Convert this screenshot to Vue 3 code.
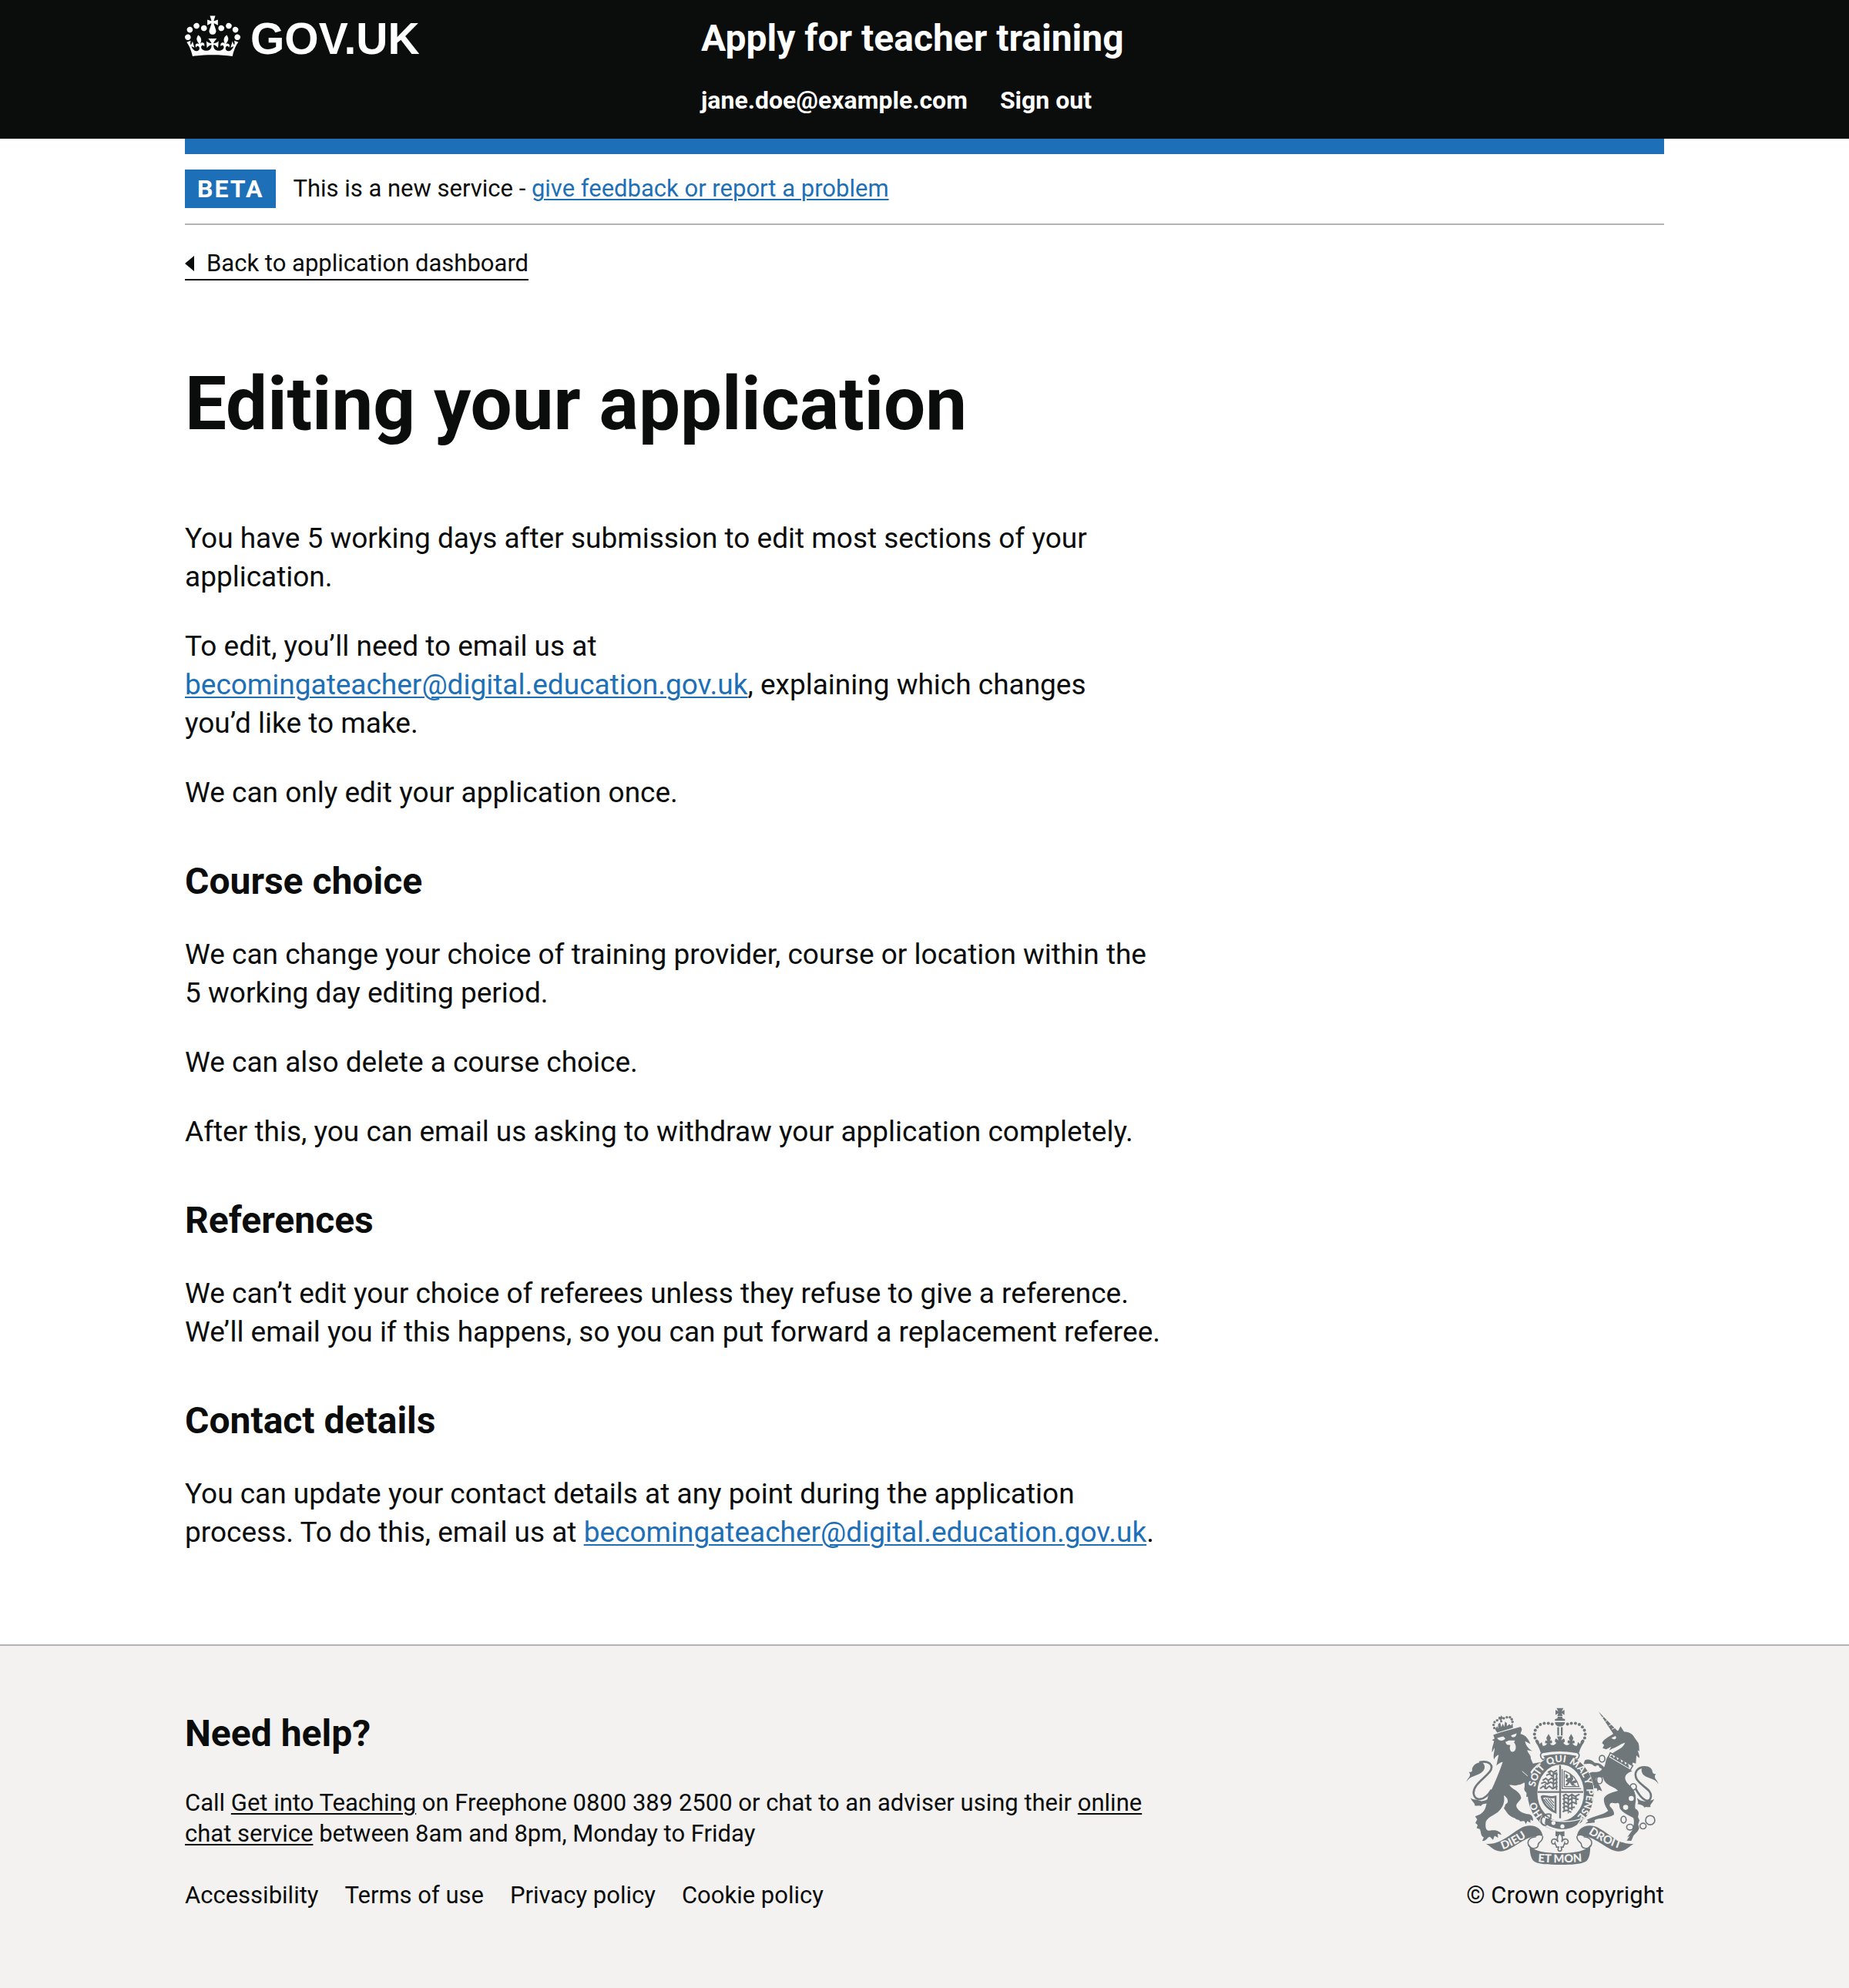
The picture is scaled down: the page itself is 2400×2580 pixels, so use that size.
<script setup>
const supportEmail = 'becomingateacher@digital.education.gov.uk'
const footerLinks = ['Accessibility', 'Terms of use', 'Privacy policy', 'Cookie policy']

// Pearls on the left arch of the crest's crown; the right arch mirrors them.
const crownPearls = [[407, 142], [392, 139], [376, 139], [361, 143], [349, 153], [341, 166], [338, 181], [340, 196], [347, 208]]
const lionPearls = [[192, 127], [182, 134], [178, 145], [181, 157], [218, 119], [230, 115], [242, 115], [249, 123], [252, 133]]
const chainRings = [[602, 277, 11, 13], [592, 360, 11, 15], [724, 387, 12, 12], [686, 515, 10, 13], [711, 544, 13, 11], [762, 540, 12, 11], [790, 517, 18, 18]]
</script>

<template>
  <div class="page">
    <header class="header">
      <div class="container header-grid">
        <a class="logo" href="#" aria-label="GOV.UK">
          <svg class="crown" viewBox="0 0 132 97" aria-hidden="true">
            <path fill="currentColor" fill-rule="evenodd" d="M25 30.2c3.5 1.5 7.7-.2 9.1-3.7 1.5-3.6-.2-7.8-3.9-9.2-3.6-1.4-7.6.3-9.1 3.9-1.4 3.5.3 7.5 3.9 9zM9 39.5c3.6 1.5 7.8-.2 9.2-3.7 1.5-3.6-.2-7.8-3.9-9.1-3.6-1.5-7.6.2-9.1 3.8-1.4 3.5.3 7.5 3.8 9zM4.4 57.2c3.5 1.5 7.7-.2 9.1-3.8 1.5-3.6-.2-7.7-3.9-9.1-3.5-1.5-7.6.3-9.1 3.8-1.4 3.5.3 7.6 3.9 9.1zm38.3-21.4c3.5 1.5 7.7-.2 9.1-3.8 1.5-3.6-.2-7.7-3.9-9.1-3.6-1.5-7.6.3-9.1 3.8-1.3 3.6.4 7.7 3.9 9.1zm64.4-5.6c-3.6 1.5-7.8-.2-9.1-3.7-1.5-3.6.2-7.8 3.8-9.2 3.6-1.4 7.7.3 9.2 3.9 1.3 3.5-.4 7.5-3.9 9zm15.9 9.3c-3.6 1.5-7.7-.2-9.1-3.7-1.5-3.6.2-7.8 3.7-9.1 3.6-1.5 7.7.2 9.2 3.8 1.5 3.5-.3 7.5-3.8 9zm4.7 17.7c-3.6 1.5-7.8-.2-9.2-3.8-1.5-3.6.2-7.7 3.9-9.1 3.6-1.5 7.7.3 9.2 3.8 1.3 3.5-.4 7.6-3.9 9.1zM89.3 35.8c-3.6 1.5-7.8-.2-9.2-3.8-1.4-3.6.2-7.7 3.9-9.1 3.6-1.5 7.7.3 9.2 3.8 1.4 3.6-.3 7.7-3.9 9.1zM69.7 17.7l8.9 4.7V9.3l-8.9 2.8c-.2-.3-.5-.6-.9-.9L72.4 0H59.6l3.5 11.2c-.3.3-.6.5-.9.9l-8.8-2.8v13.1l8.8-4.7c.3.3.6.7.9.9l-5 15.4v.1c-.2.8-.4 1.6-.4 2.4 0 4.1 3.1 7.5 7 8.1h.2c.3 0 .7.1 1 .1.4 0 .7 0 1-.1h.2c4-.6 7.1-4.1 7.1-8.1 0-.8-.1-1.7-.4-2.4V34l-5.1-15.4c.4-.2.7-.6 1-.9zM66 92.8c16.9 0 32.8 1.1 47.1 3.2 4-16.9 8.9-26.7 14-33.5l-9.6-3.4c1 4.9 1.1 7.2 0 10.2-1.5-1.4-3-4.3-4.2-8.7L108.6 76c2.8-2 5-3.2 7.5-3.3-4.4 9.4-10 11.9-13.6 11.2-4.3-.8-6.3-4.6-5.6-7.9 1-4.7 5.7-5.9 8-.5 4.3-8.7-3-11.4-7.6-8.8 7.1-7.2 7.9-13.5 2.1-21.1-8 6.1-8.1 12.3-4.5 20.8-4.7-5.4-12.1-2.5-9.5 6.2 3.4-5.2 7.9-2 7.2 3.1-.6 4.3-6.4 7.8-13.5 7.2-10.3-.9-10.9-8-11.2-13.8 2.5-.5 7.1 1.8 11 7.3L80.2 60c-4.1 4.4-8 5.3-12.3 5.4 1.4-4.4 8-11.6 8-11.6H55.5s6.4 7.2 7.9 11.6c-4.2-.1-8-1-12.3-5.4l1.4 16.4c3.9-5.5 8.5-7.7 10.9-7.3-.3 5.8-.9 12.8-11.1 13.8-7.2.6-12.9-2.9-13.5-7.2-.7-5 3.8-8.3 7.1-3.1 2.7-8.7-4.6-11.6-9.4-6.2 3.7-8.5 3.6-14.7-4.6-20.8-5.8 7.6-5 13.9 2.2 21.1-4.7-2.6-11.9.1-7.7 8.8 2.3-5.5 7.1-4.2 8.1.5.7 3.3-1.3 7.1-5.7 7.9-3.5.7-9-1.8-13.5-11.2 2.5.1 4.7 1.3 7.5 3.3l-4.7-15.4c-1.2 4.4-2.7 7.2-4.3 8.7-1.1-3-.9-5.3 0-10.2l-9.5 3.4c5 6.9 9.9 16.7 14 33.5 14.8-2.1 30.8-3.2 47.7-3.2z" />
          </svg>
          <span>GOV.UK</span>
        </a>
        <div>
          <a class="service-name" href="#">Apply for teacher training</a>
          <nav class="account-nav" aria-label="Account">
            <a href="#">jane.doe@example.com</a>
            <a href="#">Sign out</a>
          </nav>
        </div>
      </div>
    </header>

    <div class="container">
      <div class="phase-banner">
        <strong class="tag">BETA</strong>
        <span>This is a new service - <a class="link" href="#">give feedback or report a problem</a></span>
      </div>
      <a class="back-link" href="#">Back to application dashboard</a>

      <main class="main">
        <h1>Editing your application</h1>
        <p>You have 5 working days after submission to edit most sections of your application.</p>
        <p>To edit, you’ll need to email us at <a class="link" :href="`mailto:${supportEmail}`">{{ supportEmail }}</a>, explaining which changes you’d&nbsp;like to make.</p>
        <p>We can only edit your application once.</p>

        <h2>Course choice</h2>
        <p>We can change your choice of training provider, course or location within the 5&nbsp;working day editing period.</p>
        <p>We can also delete a course choice.</p>
        <p>After this, you can email us asking to withdraw your application completely.</p>

        <h2>References</h2>
        <p>We can’t edit your choice of referees unless they refuse to give a reference. We’ll email you if this happens, so you can put forward a replacement referee.</p>

        <h2>Contact details</h2>
        <p>You can update your contact details at any point during the application process. To do this, email us at <a class="link" :href="`mailto:${supportEmail}`">{{ supportEmail }}</a>.</p>
      </main>
    </div>

    <footer class="footer">
      <div class="container footer-row">
        <div class="footer-main">
          <h2>Need help?</h2>
          <p>Call <a href="#">Get into Teaching</a> on Freephone 0800 389 2500 or chat to an adviser using their <a href="#">online chat service</a> between 8am and 8pm, Monday to Friday</p>
          <ul class="footer-links">
            <li v-for="label in footerLinks" :key="label"><a href="#">{{ label }}</a></li>
          </ul>
        </div>
        <a class="copyright" href="#">
          <svg class="crest" viewBox="72 77 750 614" aria-hidden="true">
            <defs>
              <path id="motto-ring" d="M440 530A101 120 0 0 1 440 290A101 120 0 0 1 440 530" />
              <path id="motto-left" d="M214 632Q268 614 330 566" />
              <path id="motto-mid" d="M346 679Q437 687 530 678" />
              <path id="motto-right" d="M548 569Q610 611 700 638" />
            </defs>

            <!-- tails -->
            <g class="tail">
              <path d="M122 291C160 282 182 302 163 328C140 356 98 380 100 412C103 444 142 446 170 398" />
              <path d="M772 310C738 308 724 332 738 358C758 388 796 396 793 425C788 455 758 442 732 392" />
            </g>
            <path d="M72 368C76 350 94 347 82 328C92 332 96 326 94 318C98 300 116 290 134 292C146 300 146 316 136 326C118 346 84 342 72 368ZM88 430C100 440 112 434 120 440C132 446 150 440 162 430C158 442 150 448 156 450C142 454 134 452 128 462C122 456 112 464 104 459C108 452 94 446 88 430Z" />
            <path d="M822 376C818 358 800 354 812 336C802 338 798 330 798 322C790 306 776 304 762 308C752 316 756 334 766 342C782 356 808 352 822 376ZM806 434C796 444 784 436 776 442C764 446 748 440 738 430C742 444 746 450 740 454C752 456 762 458 768 468C774 462 784 470 792 464C786 458 800 450 806 434Z" />

            <!-- lion -->
            <path d="M172 204L182 198L177 184L205 174L284 152L289 162L283 180C298 182 312 194 322 219L301 209C304 226 314 238 329 247L309 243C314 258 326 264 323 276L332 296L364 290C344 302 332 314 322 330C334 346 348 366 349 398C344 408 340 418 342 426C338 436 332 438 330 428L320 436L322 424L311 426C318 414 304 410 300 402C294 392 302 380 298 370C290 376 272 386 240 379C246 396 282 402 286 430C282 444 262 452 268 466C278 486 300 492 316 494C328 496 334 508 332 520L322 514L322 528L310 520L304 532L298 520L282 522C276 512 268 518 262 510C246 502 238 500 228 484L218 470C226 462 220 456 230 452C240 440 228 426 218 420C224 450 212 470 194 486C172 502 148 508 147 530C146 546 148 560 164 558C182 554 204 558 209 574L194 570L196 586L182 578L176 594L164 582C154 582 150 600 134 598L140 584C126 580 130 560 124 552L112 548L116 536L107 528L114 514L106 502C122 496 134 492 144 474C154 456 150 424 168 402C184 370 200 330 214 290C206 290 194 300 189 304L198 262C188 264 182 274 180 280C174 262 184 244 182 234L172 252C170 234 178 222 180 208Z" />
            <g class="light">
              <path d="M192 196L216 190L224 198C218 208 202 208 196 202ZM246 186L268 178C268 190 258 196 250 192ZM224 212L238 206L262 206L258 214C268 222 268 248 254 250C240 252 240 232 244 224L230 222Z" />
              <path d="M270 378C282 384 290 372 300 374L298 392L290 384L286 396L278 388Z" />
            </g>
            <path d="M246 212L262 226M290 326L322 354" class="light-line" />
            <circle v-for="([x, y], i) in lionPearls" :key="`l${i}`" :cx="x" :cy="y" r="5" />
            <path d="M198 112L207 114L206 107L212 112L216 120L209 122L213 134L204 135L204 124L197 124ZM184 162L192 150L196 160L196 142L204 136L208 154L214 140L220 152L223 132L230 138L230 150L240 142L246 148L252 138L254 156L192 175Z" />

            <!-- unicorn -->
            <path d="M588 93L664 170L646 180ZM602 216C606 202 626 192 642 182L666 166L674 150L688 172C706 172 722 180 728 194L744 216C748 228 746 240 748 248L741 244C744 256 750 266 747 274L736 264L734 296L722 292L718 306L640 258C656 244 684 238 692 214C676 218 660 232 646 236L630 244L638 230L618 240L604 236L610 224Z" />
            <path d="M628 264L720 326C704 330 692 338 692 354C694 376 726 386 732 418C738 440 728 456 732 472C748 480 746 494 742 504L748 518L743 534L747 548C742 566 726 570 722 584L716 598L698 597L710 580L700 584L720 556C724 542 730 524 724 508C712 500 686 492 672 472C668 460 672 448 660 450C648 454 630 440 632 462C640 470 652 484 648 496C620 512 586 506 572 518L574 526L536 530L548 522L542 516C566 500 604 498 626 480C616 466 606 446 610 430C622 412 644 408 664 402C652 386 612 382 606 350C590 352 576 344 578 360C584 374 596 382 602 404L590 398L584 404L582 392L570 392L570 382L556 380C558 368 552 346 546 336L560 330C574 326 588 336 602 318C590 306 574 312 564 300C552 294 544 298 530 298L534 284C544 276 562 280 572 292C582 296 590 288 610 310C618 294 614 276 628 264Z" />
            <g class="light">
              <path d="M638 196L654 188C662 196 652 204 644 200Z" />
              <circle cx="716" cy="432" r="10" />
              <circle cx="694" cy="467" r="10" />
              <circle cx="584" cy="310" r="7" />
            </g>
            <path d="M600 118L610 112M614 132L624 126M628 148L640 142M640 162L654 156" class="light-line" />
            <path d="M634 254L722 304L712 322L626 272Z" class="outlined" />
            <path d="M632 268L642 262L648 274L656 264L662 282L672 272L678 292L688 282L692 300L702 292L708 314Z" />
            <ellipse v-for="([x, y, rx, ry], i) in chainRings" :key="`c${i}`" :cx="x" :cy="y" :rx="rx" :ry="ry" class="ring" />

            <!-- crown -->
            <path d="M424 79H451L444 92L455 86V106L444 99L448 110H427L431 99L420 106V86L431 92ZM429 112H446L448 120L457 122V129H418V122L427 120ZM418 134H457C457 144 448 151 437 151S418 144 418 134ZM427 154H434V186H427ZM441 154H448V186H441Z" />
            <template v-for="([x, y], i) in crownPearls" :key="`p${i}`">
              <circle :cx="x" :cy="y" r="6" />
              <circle :cx="874 - x" :cy="y" r="6" />
            </template>
            <path d="M343 214L354 206L358 220L366 212L370 226C378 228 384 224 388 216C380 220 376 212 382 206L388 208L384 196L393 180L402 196L398 208L404 204C410 212 406 220 398 216C402 226 416 228 424 214C416 216 416 202 422 198L432 206L426 190H448L442 206L452 198C458 202 458 216 450 214C458 228 472 226 476 216C468 220 464 212 470 204L476 208L472 196L481 180L490 196L486 208L492 206C498 212 494 220 486 216C490 224 496 228 504 226L508 212L516 220L520 206L531 214C522 226 516 238 512 254Q437 236 362 254C358 238 352 226 343 214Z" />
            <path d="M374 252Q437 240 500 252C516 254 516 270 504 280Q437 258 370 280C358 270 358 254 374 252Z" class="outlined" />

            <!-- garter -->
            <ellipse cx="440" cy="410" rx="131" ry="149" class="light" />
            <ellipse cx="440" cy="410" rx="110" ry="129" class="garter" />
            <path d="M372 266Q437 250 502 266L494 278Q437 264 380 278Z" />
            <path d="M312 330C334 346 348 366 349 398C344 408 344 416 342 426C338 436 332 438 330 428L320 436L322 424L306 426Z" />
            <g class="motto ring-text">
              <text><textPath href="#motto-ring" startOffset="80">HO</textPath></text>
              <text><textPath href="#motto-ring" startOffset="196">SOIT</textPath></text>
              <text><textPath href="#motto-ring" startOffset="296">QUI</textPath></text>
              <text><textPath href="#motto-ring" startOffset="380">MAL</textPath></text>
              <text><textPath href="#motto-ring" startOffset="466">Y</textPath></text>
              <text><textPath href="#motto-ring" startOffset="506">PENSE</textPath></text>
            </g>

            <!-- shield -->
            <path d="M438 302V510M350 407H528" class="cross" />
            <path d="M446 318V394H520M454 324C484 334 504 356 512 388M454 324V386H512" class="fine" />
            <path d="M460 336L470 342L466 354L478 350L474 334L486 344L490 356L482 366L500 360L504 370L490 374L502 384L484 382L476 370L466 382L458 380L468 368L458 364L466 358L458 350Z" />
            <g class="charge">
              <path d="M390 330L402 324L412 330L426 322M384 342L396 336L406 344L418 334L428 340M370 362L382 354L392 362L404 352L416 360L428 352M364 374L378 368L388 376L402 368L412 376L428 368M360 394L372 384L384 394L396 384L408 394L428 384M398 324V340M412 330V396M392 362V376M380 376V396M424 330V398" />
              <path d="M448 422L460 416L472 424L484 416L496 424L514 416M448 436L462 430L474 438L488 430L510 436M448 454L460 446L472 456L486 446L504 454M448 468L462 462L474 470L496 466M448 484L462 478L482 486M454 416V486M470 422V490M484 418V478M500 420V454" />
            </g>
            <path d="M362 424C376 412 392 430 424 420V492C400 484 368 462 362 424ZM372 430C376 450 392 468 416 480V430C398 436 384 424 372 430Z" fill-rule="evenodd" />
            <path d="M380 432L412 470M390 432L414 462M400 434L414 450M374 436L410 478" class="fine" />

            <!-- strap and buckle -->
            <path d="M366 498C400 540 460 552 520 528L552 500C530 540 480 562 440 560C400 556 376 540 356 520Z" class="light" />
            <path d="M380 504C410 524 470 530 524 510L506 536C470 562 420 560 376 532Z" class="strap" />
            <path d="M404 496C388 488 366 500 364 516C362 534 376 540 386 534M404 496C396 504 406 510 398 514C388 512 376 520 392 526" class="buckle" />
            <circle cx="412" cy="528" r="8" class="light" />
            <circle cx="447" cy="541" r="8" class="light" />

            <!-- pendant -->
            <path d="M420 560Q437 564 455 560V580H420Z" />
            <path d="M437 568C450 580 448 592 444 602C454 584 472 590 469 604C467 612 458 612 456 606C454 614 450 618 450 622L442 622C446 632 444 638 437 638S428 632 432 622L424 622C424 618 420 614 418 606C416 612 407 612 405 604C402 590 420 584 430 602C426 592 424 580 437 568Z" class="outlined" />

            <!-- ribbon -->
            <g v-for="side in ['left', 'right']" :key="side" :class="side === 'right' && 'mirrored'">
              <path d="M344 582C314 584 306 604 318 620C326 632 350 628 352 616C350 600 372 604 370 580" class="outlined" />
              <path d="M148 609C210 616 262 552 300 541C340 532 366 548 371 582C364 576 356 574 346 580C290 584 250 640 206 639C180 638 168 620 148 609Z" />
            </g>
            <path d="M318 612C330 640 390 646 437 646S544 640 556 612C556 640 554 664 542 676C526 690 480 691 437 691S348 690 334 676C322 662 320 640 318 612Z" />
            <g class="motto ribbon-text">
              <text><textPath href="#motto-left">DIEU</textPath></text>
              <text><textPath href="#motto-mid" startOffset="50%" text-anchor="middle">ET MON</textPath></text>
              <text><textPath href="#motto-right">DROIT</textPath></text>
            </g>
          </svg>
          <span>© Crown copyright</span>
        </a>
      </div>
    </footer>
  </div>
</template>

<style>
body {
  margin: 0;
  background: #f3f2f1;
}
</style>

<style scoped>
.page {
  background: #fff;
  color: #0b0c0c;
  font-family: Roboto, "Liberation Sans", sans-serif;
  font-size: 31px;
  line-height: 40px;
}

.container {
  width: 80%;
  margin: 0 auto;
}

h1,
h2,
p {
  margin: 0;
}

h1 {
  margin-bottom: 100px;
  font-size: 96px;
  line-height: 100px;
}

h2 {
  margin-bottom: 40px;
  font-size: 48px;
  line-height: 60px;
}

a {
  color: inherit;
  text-decoration-thickness: 2px;
  text-underline-offset: 3px;
}

.link {
  color: #1d70b8;
}

/* Header */
.header {
  padding: 20px 0 30px;
  background: #0b0c0c;
  color: #fff;
}

.header a {
  text-decoration: none;
}

.header-grid {
  display: grid;
  grid-template-columns: 1fr 2fr;
  column-gap: 45px;
}

.logo {
  display: flex;
  align-items: flex-start;
  gap: 13px;
  font: bold 57px/60px "Liberation Sans", Arial, sans-serif;
}

.crown {
  width: 72px;
  height: 54px;
}

.service-name {
  display: block;
  margin-bottom: 30px;
  font-size: 48px;
  font-weight: 700;
  line-height: 60px;
}

.account-nav {
  display: flex;
  gap: 42px;
  font-size: 32px;
  font-weight: 700;
}

/* Banner */
.phase-banner {
  display: flex;
  align-items: center;
  gap: 22px;
  padding: 20px 0;
  border-top: 20px solid #1d70b8;
  border-bottom: 2px solid #b1b4b6;
}

.tag {
  padding: 5px 16px;
  background: #1d70b8;
  color: #fff;
  font-size: 32px;
  letter-spacing: 2px;
}

.back-link {
  display: inline-flex;
  align-items: center;
  gap: 16px;
  margin-top: 30px;
  border-bottom: 2px solid #0b0c0c;
  text-decoration: none;
}

.back-link::before {
  content: "";
  border: solid transparent;
  border-width: 10px 12px 10px 0;
  border-right-color: #0b0c0c;
}

/* Content */
.main {
  max-width: 1272px;
  padding: 110px 0 80px;
}

.main p {
  margin-bottom: 40px;
  font-size: 37px;
  line-height: 50px;
}

.main h2 {
  margin-top: 60px;
}

/* Footer */
.footer {
  padding: 80px 0 100px;
  border-top: 2px solid #b1b4b6;
  background: #f3f2f1;
}

.footer-row {
  display: flex;
  align-items: flex-end;
  justify-content: space-between;
}

.footer-main {
  max-width: 1272px;
}

.footer-links {
  display: flex;
  gap: 34px;
  margin: 40px 0 0;
  padding: 0;
  list-style: none;
}

.footer-links a,
.copyright {
  text-decoration: none;
}

.copyright {
  display: flex;
  flex-direction: column;
  align-items: flex-start;
  gap: 20px;
}

/* Crest */
.crest {
  width: 250px;
  height: 204px;
  fill: #6f777b;
}

.crest .light {
  fill: #f3f2f1;
}

.crest .outlined {
  fill: #f3f2f1;
  stroke: #6f777b;
  stroke-width: 5;
}

.tail,
.ring,
.fine,
.charge,
.cross,
.buckle,
.garter {
  stroke: #6f777b;
  fill: none;
}

.tail {
  stroke-width: 8;
}

.ring {
  stroke-width: 5;
}

.fine {
  stroke-width: 4;
}

.charge {
  stroke-width: 6;
}

.cross {
  stroke-width: 7;
}

.buckle {
  stroke-width: 6;
}

.garter {
  fill: #f3f2f1;
  stroke-width: 38;
}

.strap {
  stroke: #f3f2f1;
  stroke-width: 4;
}

.light-line {
  stroke: #f3f2f1;
  stroke-width: 3;
  fill: none;
}

.mirrored {
  transform: translateX(874px) scaleX(-1);
}

.motto {
  fill: #f3f2f1;
  font-family: Lato, sans-serif;
  font-weight: 900;
}

.ring-text {
  font-size: 38px;
}

.ribbon-text {
  font-size: 44px;
}
</style>
